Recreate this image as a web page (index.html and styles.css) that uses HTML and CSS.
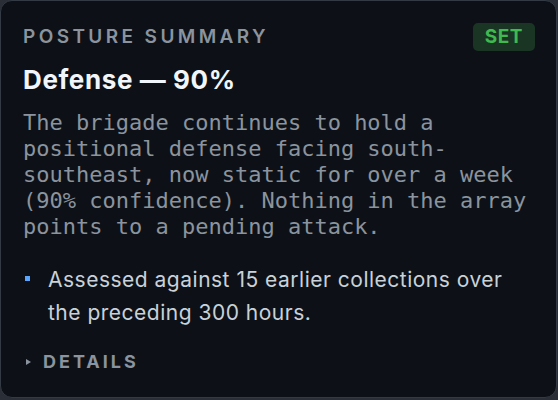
FILE: index.html
```html
<!doctype html>
<html lang="en">
  <head>
    <meta charset="UTF-8" />
    <meta name="viewport" content="width=device-width, initial-scale=1.0" />
    <title>Posture Summary</title>
    <link rel="stylesheet" href="styles.css">
  </head>
  <body>
    <div class="card">
      <div class="card-header">
        <span class="eyebrow">Posture Summary</span>
        <span class="badge">SET</span>
      </div>

      <h2 class="posture-title">Defense — 90%</h2>

      <p class="narrative">
        The brigade continues to hold a positional defense facing south-southeast, now static for over a week (90% confidence). Nothing in the array points to a pending attack.
      </p>

      <ul class="findings">
        <li>Assessed against 15 earlier collections over the preceding 300 hours.</li>
      </ul>

      <div class="details-toggle">
        <span class="caret"></span>
        <span>Details</span>
      </div>
    </div>
  </body>
</html>
```

FILE: styles.css
```css
body {
  margin: 0;
  background: #2a2f37;
  font-family: Inter, "Noto Sans", sans-serif;
}

.card {
  box-sizing: border-box;
  width: 557px;
  height: 398px;
  background: #0d1117;
  border: 1px solid #343a43;
  border-radius: 12px;
  padding: 21px 22px 0 22px;
}

.card-header {
  display: flex;
  justify-content: space-between;
  align-items: center;
  height: 29px;
}

.eyebrow {
  color: #8b949e;
  font-size: 19px;
  font-weight: 600;
  letter-spacing: 3.4px;
  text-transform: uppercase;
}

.badge {
  background: #1a3524;
  color: #3fb950;
  font-size: 19px;
  font-weight: 700;
  letter-spacing: 0.5px;
  line-height: 28px;
  padding: 0 12px;
  border-radius: 5px;
  margin-right: -1px;
}

.posture-title {
  margin: 14px 0 0 0;
  color: #f0f6fc;
  font-size: 26px;
  font-weight: 700;
  letter-spacing: 0.6px;
  line-height: 30px;
}

.narrative {
  margin: 15px 0 0 0;
  color: #8b949e;
  font-family: "DejaVu Sans Mono", monospace;
  font-size: 22px;
  line-height: 26px;
}

.findings {
  list-style: none;
  margin: 23px 0 0 0;
  padding: 0;
}

.findings li {
  display: flex;
  gap: 18px;
  color: #c9d1d9;
  font-size: 21px;
  letter-spacing: 0.5px;
  line-height: 33px;
}

.findings li::before {
  content: "";
  flex: none;
  width: 5px;
  height: 5px;
  margin: 13px 0 0 2px;
  background: #58a6ff;
}

.details-toggle {
  display: flex;
  align-items: center;
  gap: 12px;
  margin-top: 22px;
  color: #8b949e;
  font-size: 18px;
  font-weight: 700;
  letter-spacing: 3px;
  text-transform: uppercase;
}

.caret {
  width: 0;
  height: 0;
  margin-left: 3px;
  border-top: 3.5px solid transparent;
  border-bottom: 3.5px solid transparent;
  border-left: 5px solid #8b949e;
}
```
